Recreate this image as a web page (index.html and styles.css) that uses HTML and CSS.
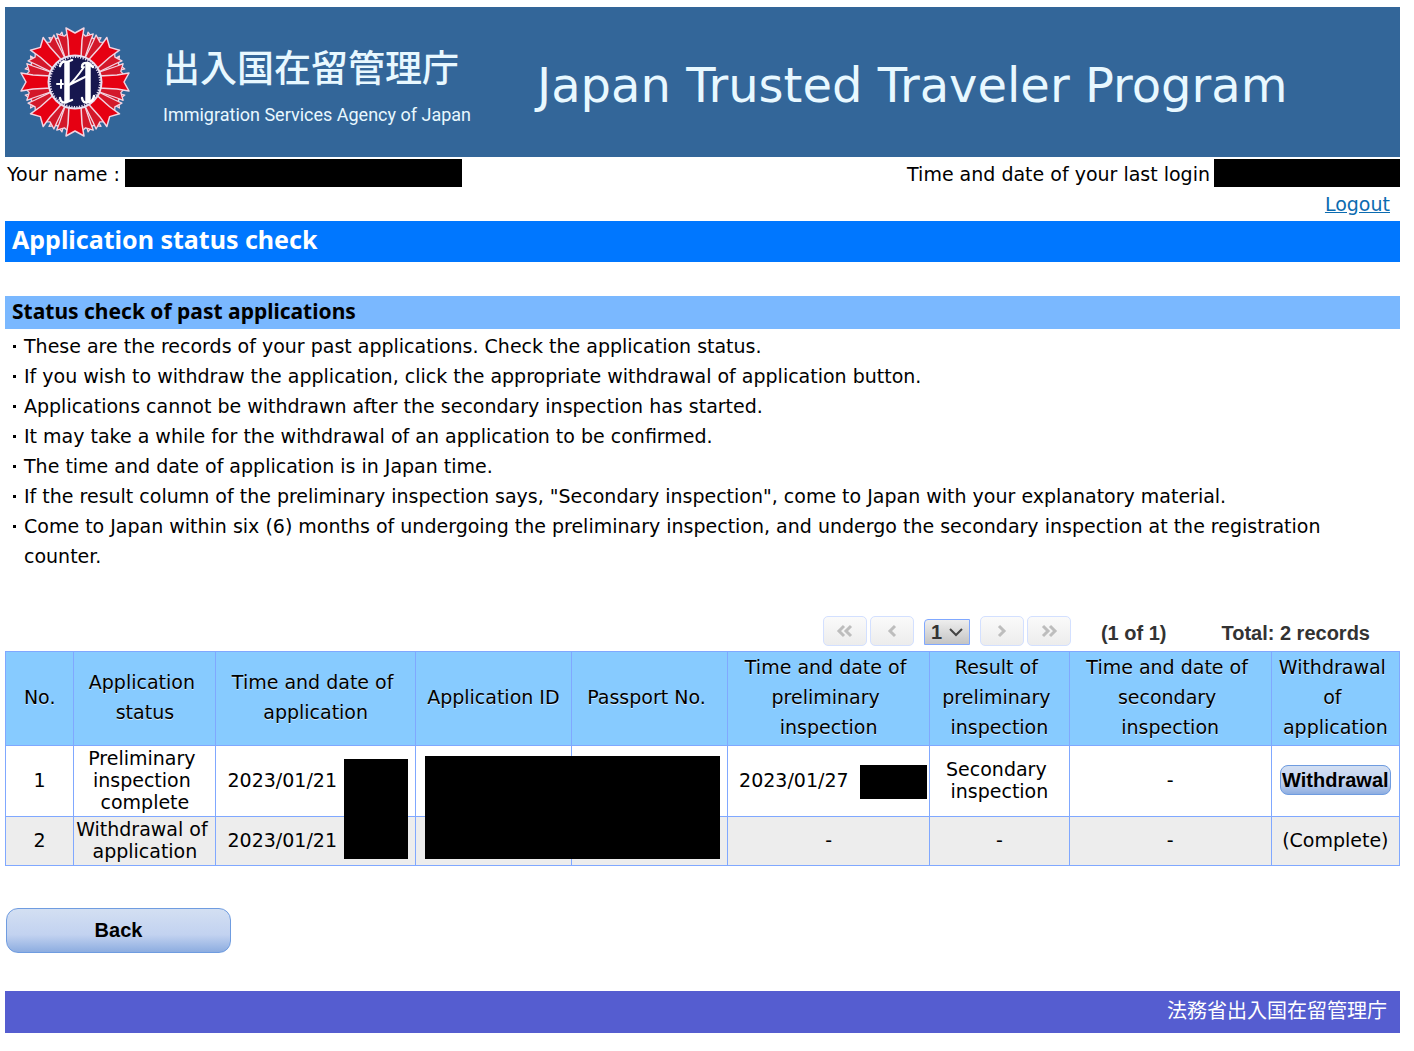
FILE: index.html
```html
<!DOCTYPE html>
<html lang="en">
<head>
    <meta charset="UTF-8">
    <title>Japan Trusted Traveler Program</title>
    <link rel="stylesheet" href="styles.css">
</head>
<body>
    <header class="banner">
        <svg class="emblem" viewBox="-56 -56 112 112" aria-hidden="true">
            <defs>
                <path id="ray-side" fill="#d3182a" stroke="#f3d5e2" stroke-width="1.3" stroke-linejoin="round" d="M-4 -24 L-6 -44 L-7 -51 L0 -47 L7 -51 L6 -44 L4 -24z"/>
                <path id="ray" fill="#e60012" stroke="#f3d5e2" stroke-width="1.5" stroke-linejoin="round" d="M-6 -24 L-7 -42 L-9 -54 L0 -49 L9 -54 L7 -42 L6 -24z"/>
            </defs>
            <g>
                <use href="#ray-side" transform="rotate(22.5)"/>
                <use href="#ray-side" transform="rotate(67.5)"/>
                <use href="#ray-side" transform="rotate(112.5)"/>
                <use href="#ray-side" transform="rotate(157.5)"/>
                <use href="#ray-side" transform="rotate(202.5)"/>
                <use href="#ray-side" transform="rotate(247.5)"/>
                <use href="#ray-side" transform="rotate(292.5)"/>
                <use href="#ray-side" transform="rotate(337.5)"/>
                <use href="#ray-side" transform="rotate(13)"/>
                <use href="#ray-side" transform="rotate(32)"/>
                <use href="#ray-side" transform="rotate(58)"/>
                <use href="#ray-side" transform="rotate(77)"/>
                <use href="#ray-side" transform="rotate(103)"/>
                <use href="#ray-side" transform="rotate(122)"/>
                <use href="#ray-side" transform="rotate(148)"/>
                <use href="#ray-side" transform="rotate(167)"/>
                <use href="#ray-side" transform="rotate(193)"/>
                <use href="#ray-side" transform="rotate(212)"/>
                <use href="#ray-side" transform="rotate(238)"/>
                <use href="#ray-side" transform="rotate(257)"/>
                <use href="#ray-side" transform="rotate(283)"/>
                <use href="#ray-side" transform="rotate(302)"/>
                <use href="#ray-side" transform="rotate(328)"/>
                <use href="#ray-side" transform="rotate(347)"/>
            </g>
            <g>
                <use href="#ray"/>
                <use href="#ray" transform="rotate(45)"/>
                <use href="#ray" transform="rotate(90)"/>
                <use href="#ray" transform="rotate(135)"/>
                <use href="#ray" transform="rotate(180)"/>
                <use href="#ray" transform="rotate(225)"/>
                <use href="#ray" transform="rotate(270)"/>
                <use href="#ray" transform="rotate(315)"/>
            </g>
            <circle r="26.5" fill="#17174f" stroke="#e8dff0" stroke-width="2"/>
            <circle r="25" fill="none" stroke="#e8dff0" stroke-width="2" stroke-dasharray="1.2 1.4"/>
            <g fill="none" stroke="#fff" stroke-linecap="round">
                <path stroke-width="5.5" stroke-linecap="butt" d="M-8 -20 V20 M13 -19 V20"/>
                <path stroke-width="2.4" d="M-8 -20 Q-13 -22 -15 -16 M-8 -20 L-3 -22 M-8 20 Q-14 22 -15 16 M-8 20 L-3 18 M13 -19 Q7 -20 7 -15 M13 -19 L18 -15 M13 20 Q8 22 7 16 M13 20 Q18 20 19 14"/>
                <path stroke-width="2" d="M-18 2 H-12 M-14 -2 V6 M-8 5 Q0 -2 9 -15 M-8 4 L12 -6"/>
            </g>
        </svg>
        <div class="agency">
            <div class="agency-ja" lang="ja">出入国在留管理庁</div>
            <div class="agency-en">Immigration Services Agency of Japan</div>
        </div>
        <div class="program">Japan Trusted Traveler Program</div>
    </header>

    <div class="user">
        <div class="user-row">
            <div class="user-name">Your name :<span class="mask mask-name"></span></div>
            <div class="last-login">Time and date of your last login<span class="mask mask-login"></span></div>
        </div>
        <a class="logout" href="#">Logout</a>
    </div>

    <main>
        <h1>Application status check</h1>
        <h2>Status check of past applications</h2>
        <ul class="notes">
            <li>These are the records of your past applications. Check the application status.</li>
            <li>If you wish to withdraw the application, click the appropriate withdrawal of application button.</li>
            <li>Applications cannot be withdrawn after the secondary inspection has started.</li>
            <li>It may take a while for the withdrawal of an application to be confirmed.</li>
            <li>The time and date of application is in Japan time.</li>
            <li>If the result column of the preliminary inspection says, "Secondary inspection", come to Japan with your explanatory material.</li>
            <li>Come to Japan within six (6) months of undergoing the preliminary inspection, and undergo the secondary inspection at the registration counter.</li>
        </ul>

        <div class="paginator">
            <button class="page-btn" type="button" aria-label="First page" disabled>
                <svg viewBox="0 0 18 14"><path d="M8 2 L3 7 L8 12 M15 2 L10 7 L15 12"/></svg>
            </button>
            <button class="page-btn" type="button" aria-label="Previous page" disabled>
                <svg viewBox="0 0 18 14"><path d="M12 2 L7 7 L12 12"/></svg>
            </button>
            <div class="page-select">
                <select aria-label="Page">
                    <option>1</option>
                </select>
                <svg viewBox="0 0 14 10" aria-hidden="true"><path d="M1 2 L7 8 L13 2"/></svg>
            </div>
            <button class="page-btn" type="button" aria-label="Next page" disabled>
                <svg viewBox="0 0 18 14"><path d="M6 2 L11 7 L6 12"/></svg>
            </button>
            <button class="page-btn" type="button" aria-label="Last page" disabled>
                <svg viewBox="0 0 18 14"><path d="M3 2 L8 7 L3 12 M10 2 L15 7 L10 12"/></svg>
            </button>
            <span class="page-count">(1 of 1)</span>
            <span class="page-total">Total: 2 records</span>
        </div>

        <table class="records">
            <colgroup>
                <col class="c-no"><col class="c-status"><col class="c-date"><col class="c-id"><col class="c-id">
                <col class="c-insp"><col class="c-result"><col class="c-insp"><col class="c-withdraw">
            </colgroup>
            <thead>
                <tr>
                    <th>No.</th>
                    <th>Application&nbsp;<br>status</th>
                    <th>Time and date of&nbsp;<br>application</th>
                    <th>Application ID</th>
                    <th>Passport No.&nbsp;</th>
                    <th>Time and date of&nbsp;<br>preliminary&nbsp;<br>inspection</th>
                    <th>Result of&nbsp;<br>preliminary&nbsp;<br>inspection</th>
                    <th>Time and date of&nbsp;<br>secondary&nbsp;<br>inspection</th>
                    <th>Withdrawal&nbsp;<br>of&nbsp;<br>application</th>
                </tr>
            </thead>
            <tbody>
                <tr>
                    <td>1</td>
                    <td>Preliminary&nbsp;<br>inspection&nbsp;<br>complete</td>
                    <td class="date">2023/01/21<span class="mask mask-time"></span></td>
                    <td class="wide"><span class="mask mask-ids"></span></td>
                    <td></td>
                    <td class="date">2023/01/27<span class="mask mask-insp"></span></td>
                    <td>Secondary&nbsp;<br>inspection</td>
                    <td>-</td>
                    <td><button class="btn btn-small" type="button">Withdrawal</button></td>
                </tr>
                <tr>
                    <td>2</td>
                    <td>Withdrawal of&nbsp;<br>application</td>
                    <td class="date">2023/01/21</td>
                    <td></td>
                    <td></td>
                    <td>-</td>
                    <td>-</td>
                    <td>-</td>
                    <td>(Complete)</td>
                </tr>
            </tbody>
        </table>

        <button class="btn btn-back" type="button">Back</button>
    </main>

    <footer lang="ja">法務省出入国在留管理庁</footer>
</body>
</html>
```
FILE: styles.css
```css
*{
    box-sizing: border-box;
}
body{
    margin: 7px 14px 18px 5px;
    background: #fff;
    color: #000;
    font: 19px/30px "DejaVu Sans", "Noto Sans CJK JP", sans-serif;
}
.banner{
    display: flex;
    align-items: center;
    height: 150px;
    padding-left: 14px;
    background: #336699;
    color: #e8f8ff;
}
.emblem{
    width: 112px;
    height: 112px;
    flex: none;
}
.agency{
    margin-left: 32px;
    padding-top: 8px;
    white-space: nowrap;
}
.agency-ja{
    font: 500 37px/48px "Noto Sans CJK JP", sans-serif;
}
.agency-en{
    padding-top: 10px;
    font: 18px/30px Roboto, sans-serif;
}
.program{
    margin-left: 66px;
    padding-top: 6px;
    font-size: 48px;
    line-height: 60px;
    white-space: nowrap;
}

/* user info */
.user{
    height: 64px;
}
.user-row{
    display: flex;
    justify-content: space-between;
    padding: 2px 0 0 2px;
}
.user-name,
.last-login{
    display: flex;
    flex: none;
}
.last-login{
    margin-right: -4px;
}
.mask{
    flex: none;
    background: #000;
}
.mask-name{
    width: 337px;
    height: 28px;
    margin-left: 5px;
}
.mask-login{
    width: 190px;
    height: 28px;
    margin-left: 4px;
}
.logout{
    display: block;
    width: fit-content;
    margin: 0 10px 0 auto;
    color: #0b6bb0;
}

h1,
h2{
    font-family: "Noto Sans", sans-serif;
}
h1{
    margin: 0 0 34px;
    padding: 0 7px 5px;
    background: #0077ff;
    color: #fff;
    font-size: 25px;
    line-height: 36px;
}
h2{
    margin: 0;
    padding: 0 7px 3px;
    background: #7ab8ff;
    font-size: 21px;
    line-height: 30px;
}
.notes{
    margin: 2px 0 0;
    padding: 0 40px 0 19px;
    list-style: none;
}
.notes li::before{
    content: "";
    float: left;
    width: 3px;
    height: 3px;
    margin: 14px 0 0 -11px;
    background: #000;
}

/* paginator */
.paginator{
    display: flex;
    align-items: center;
    justify-content: flex-end;
    gap: 3px;
    margin-top: 43px;
    padding: 0 30px 3px 0;
    color: #333;
    font: bold 20px/30px "Liberation Sans", sans-serif;
}
.page-btn{
    display: flex;
    align-items: center;
    justify-content: center;
    width: 44px;
    height: 30px;
    padding: 0;
    border: 1px solid #d3e0ff;
    border-radius: 5px;
    background: linear-gradient(#fafafa, #ececec);
}
.page-btn svg{
    width: 18px;
    height: 14px;
    fill: none;
    stroke: #bdbdbd;
    stroke-width: 3;
}
.page-select{
    display: grid;
    align-items: center;
    margin: 2px 7px 0;
}
.page-select select,
.page-select svg{
    grid-area: 1 / 1;
}
.page-select select{
    appearance: none;
    width: 46px;
    height: 26px;
    padding: 0 0 0 6px;
    border: 1px solid #80a8ff;
    border-radius: 4px 0 0 0;
    background: linear-gradient(#eee, #c4c4c4);
    color: #333;
    font: bold 20px/24px "Liberation Sans", sans-serif;
}
.page-select svg{
    justify-self: end;
    width: 14px;
    height: 10px;
    margin-right: 7px;
    fill: none;
    stroke: #444;
    stroke-width: 2;
    pointer-events: none;
}
.page-count{
    margin: 4px 0 0 27px;
}
.page-total{
    margin: 4px 0 0 52px;
}

/* records table */
.records{
    width: 100%;
    table-layout: fixed;
    border-collapse: collapse;
    text-align: center;
}
.c-no{ width: 4.9%; }
.c-status{ width: 10.2%; }
.c-date{ width: 14.3%; }
.c-id{ width: 11.2%; }
.c-insp{ width: 14.5%; }
.c-result{ width: 10%; }
.records th,
.records td{
    border: 1px solid #80a8ff;
    white-space: nowrap;
}
.records th{
    padding: 0 0 3px;
    background: #87cbff;
    font-weight: normal;
    text-shadow: 0 1px 0 rgba(255, 255, 255, 0.7);
}
.records td{
    padding: 1px 0 3px;
    line-height: 22px;
}
.records tbody tr:nth-child(even){
    background: #ededed;
}
.records .date{
    position: relative;
    padding-left: 11px;
    text-align: left;
}
.records .wide{
    position: relative;
}
.records .mask{
    position: absolute;
    z-index: 1;
}
.mask-time{
    top: 13px;
    right: 7px;
    width: 64px;
    height: 100px;
}
.mask-ids{
    top: 10px;
    left: 9px;
    width: 295px;
    height: 103px;
}
.mask-insp{
    top: 19px;
    right: 2px;
    width: 67px;
    height: 34px;
}

.btn{
    border: 1px solid #6f9ce0;
    background: linear-gradient(#d3dff2, #c2d2f0 60%, #8dade0);
    color: #000;
    font: bold 20px/28px "Liberation Sans", sans-serif;
}
.btn-small{
    padding: 0 1px;
    border-radius: 8px;
}
.btn-back{
    display: block;
    width: 225px;
    height: 45px;
    margin: 42px 0 38px 1px;
    padding-bottom: 3px;
    border-radius: 12px;
}

footer{
    padding: 4px 13px 8px;
    background: #555dd0;
    color: #fff;
    font-family: "Noto Sans CJK JP", sans-serif;
    font-size: 20px;
    text-align: right;
}
```
